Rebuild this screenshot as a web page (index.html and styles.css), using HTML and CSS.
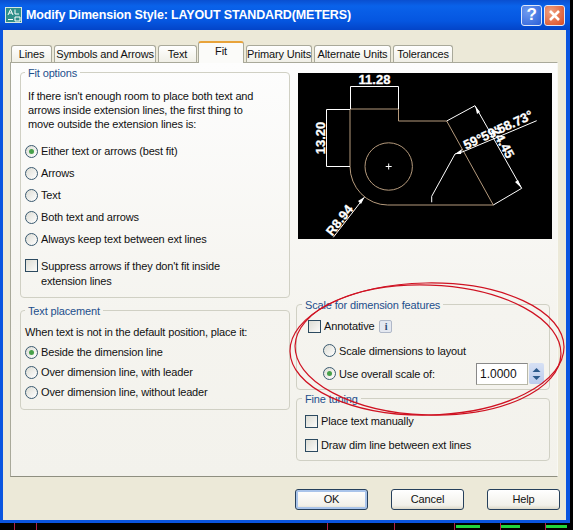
FILE: index.html
```html
<!doctype html>
<html lang="en">
  <head>
    <meta charset="UTF-8">
    <meta name="viewport" content="width=device-width, initial-scale=1.0">
    <title>Modify Dimension Style</title>
    <link rel="stylesheet" href="styles.css">
  </head>
  <body>
    <div class="window">
      <!-- Title bar -->
      <div class="titlebar">
        <svg class="app-icon" width="17" height="16" viewBox="0 0 17 16">
          <rect x="0.5" y="0.5" width="16" height="15" fill="#2f8f8a" stroke="#d8e8e0"/>
          <path d="M3 8 L5.5 2.5 L8 8 M4 6 H7" fill="none" stroke="#fff"/>
          <path d="M10 2.5 V7 H14 M3 12.5 H8 M10 10 H15 V14 H10 Z" fill="none" stroke="#fff"/>
        </svg>
        <span class="title">Modify Dimension Style: LAYOUT STANDARD(METERS)</span>
        <span class="cap-btn cap-help">?</span>
        <span class="cap-btn cap-close">
          <svg width="13" height="13" viewBox="0 0 13 13"><path d="M2 2 L11 11 M11 2 L2 11" stroke="#fff" stroke-width="2.6"/></svg>
        </span>
      </div>

      <div class="client">
        <!-- Tabs -->
        <div class="tabs">
          <span class="tab tab-lines">Lines</span>
          <span class="tab tab-symbols">Symbols and Arrows</span>
          <span class="tab tab-text">Text</span>
          <span class="tab tab-fit active">Fit</span>
          <span class="tab tab-primary">Primary Units</span>
          <span class="tab tab-alt">Alternate Units</span>
          <span class="tab tab-tol">Tolerances</span>
        </div>

        <div class="page">
          <div class="col-left">
            <fieldset class="group group-fit">
              <legend>Fit options</legend>
              <p class="note">If there isn't enough room to place both text and<br>arrows inside extension lines, the first thing to<br>move outside the extension lines is:</p>
              <div class="radios-fit">
                <div class="row"><span class="radio on"></span>Either text or arrows (best fit)</div>
                <div class="row"><span class="radio"></span>Arrows</div>
                <div class="row"><span class="radio"></span>Text</div>
                <div class="row"><span class="radio"></span>Both text and arrows</div>
                <div class="row"><span class="radio"></span>Always keep text between ext lines</div>
              </div>
              <div class="row-check">
                <span class="check"></span>
                <span>Suppress arrows if they don't fit inside<br>extension lines</span>
              </div>
            </fieldset>

            <fieldset class="group group-place">
              <legend>Text placement</legend>
              <p class="note-place">When text is not in the default position, place it:</p>
              <div class="row row-place"><span class="radio on"></span>Beside the dimension line</div>
              <div class="row row-place"><span class="radio"></span>Over dimension line, with leader</div>
              <div class="row row-place"><span class="radio"></span>Over dimension line, without leader</div>
            </fieldset>
          </div>

          <div class="col-right">
            <!-- Preview drawing, coordinates are screen pixels -->
            <svg class="preview" width="254" height="166" viewBox="298 74 254 166">
              <rect x="298" y="74" width="254" height="166" fill="#000"/>
              <g fill="none" stroke="#b59a7c">
                <path d="M350 110 H398.5 V122 H446.7 L493.3 206 H387.7 A37.7 38.7 0 0 1 350 167.3 Z"/>
                <circle cx="388.7" cy="167.5" r="23.7"/>
              </g>
              <g fill="none" stroke="#fff">
                <path d="M350.5 110 V87.5 H398.5 V110"/>
                <path d="M350 110.5 H326.5 V167.5 H350"/>
                <path d="M385.7 167.5 H391.7 M388.7 164.5 V170.5"/>
                <path d="M333.3 238.3 L364.3 198.3"/>
                <path d="M446.7 122 L475 106.7 L521.7 189.3 L493.3 206"/>
                <path d="M431.7 203.3 V197.3 L455 155 L463 152.7 L536.7 121.7"/>
              </g>
              <path d="M364.5 198 L358 202 L361 205 Z M455 155 L462 150 L461 155 Z M521.7 189.3 L515 183 L518 181 Z M475 106.7 L480 113 L477 115 Z" fill="#fff"/>
              <g class="dim-text">
                <text x="374.5" y="85" text-anchor="middle">11.28</text>
                <text transform="translate(325 139) rotate(-90)" text-anchor="middle">13.20</text>
                <text transform="translate(343 224) rotate(-52)" text-anchor="middle">R8.94</text>
                <text transform="translate(500 135) rotate(-25)" text-anchor="middle">59°59'58.73°</text>
                <text transform="translate(499 146) rotate(61)" text-anchor="middle">24.45</text>
              </g>
            </svg>

            <fieldset class="group group-scale">
              <legend>Scale for dimension features</legend>
              <div class="row row-annot">
                <span class="check"></span>Annotative
                <span class="info">i</span>
              </div>
              <div class="row row-scale row-scale-first"><span class="radio"></span>Scale dimensions to layout</div>
              <div class="row row-scale">
                <span class="radio on"></span>Use overall scale of:
                <span class="spin-input">1.0000</span>
                <span class="spinner">
                  <svg width="15" height="21" viewBox="0 0 15 21">
                    <path d="M7.5 5 L11.5 9 H3.5 Z M7.5 17 L11.5 13 H3.5 Z" fill="#2c5a8c"/>
                  </svg>
                </span>
              </div>
            </fieldset>

            <fieldset class="group group-fine">
              <legend>Fine tuning</legend>
              <div class="row row-fine row-fine-first"><span class="check"></span>Place text manually</div>
              <div class="row row-fine"><span class="check"></span>Draw dim line between ext lines</div>
            </fieldset>
          </div>
        </div>

        <!-- Buttons -->
        <div class="buttons">
          <span class="btn btn-default">OK</span>
          <span class="btn">Cancel</span>
          <span class="btn">Help</span>
        </div>
      </div>

      <!-- Hand drawn red ellipse over the dialog -->
      <svg class="markup" width="573" height="530" viewBox="0 0 573 530">
        <g fill="none" stroke="#cf1222" stroke-width="1.2">
          <ellipse cx="427" cy="349" rx="137" ry="66" transform="rotate(-1 427 349)"/>
          <ellipse cx="428" cy="350" rx="133" ry="65" transform="rotate(2 428 350)"/>
        </g>
      </svg>
    </div>

    <!-- Bit of the desktop below the dialog -->
    <svg class="below" width="573" height="7" viewBox="0 0 573 7">
      <path d="M14.5 0 V7 M36.5 0 V7 M327.5 0 V7 M394.5 0 V7 M454.5 0 V7 M500.5 0 V7 M545.5 0 V7" stroke="#b0204a"/>
      <path d="M456 2 H480 V5 H456 Z M501 2 H520 V5 H501 Z M546 2 H567 V5 H546 Z" fill="#22d63c"/>
    </svg>
  </body>
</html>
```

FILE: styles.css
```css
body {
  margin: 0;
  background: #000;
  font-family: "Liberation Sans", Arial, sans-serif;
  font-size: 11px;
  letter-spacing: -0.15px;
  color: #111;
  width: 573px;
  height: 530px;
  overflow: hidden;
}
.window {
  position: relative;
  width: 570px;
  height: 523px;
  background: #0a55e0;
  box-sizing: border-box;
  border-radius: 0 6px 0 0;
}
.titlebar {
  height: 30px;
  display: flex;
  align-items: center;
  padding: 0 5px;
  background: linear-gradient(#0a4fd0, #0a62ea 20%, #0556e0 70%, #0344c8);
}
.app-icon {
  margin-right: 4px;
}
.title {
  flex: 1;
  color: #fff;
  font-weight: bold;
  font-size: 12.5px;
  white-space: nowrap;
}
.cap-btn {
  width: 21px;
  height: 21px;
  box-sizing: border-box;
  border: 1px solid #dfe8fa;
  border-radius: 3px;
  display: flex;
  align-items: center;
  justify-content: center;
  color: #fff;
  font-size: 17px;
  font-weight: bold;
}
.cap-help {
  background: radial-gradient(circle at 30% 30%, #6f9bf0, #2a5fd8);
  margin-right: 2px;
}
.cap-close {
  background: radial-gradient(circle at 30% 30%, #f0a080, #d84a22);
}
.client {
  margin: 0 4px 0 3px;
  height: 490px;
  background: #ece9d8;
  padding: 11px 0 0 7px;
  box-sizing: border-box;
}
.tabs {
  display: flex;
  align-items: flex-end;
  height: 21px;
  padding-left: 1px;
  position: relative;
  z-index: 1;
}
.tab {
  height: 17px;
  line-height: 16px;
  box-sizing: border-box;
  margin-right: 2px;
  text-align: center;
  border: 1px solid #a9a99a;
  border-bottom: none;
  border-radius: 3px 3px 0 0;
  background: linear-gradient(#fff, #f0efe6);
  white-space: nowrap;
}
.tab.active {
  line-height: 16px;
  margin-bottom: -1px;
  height: 22px;
  background: #fbfbf9;
  border-top: 2px solid #e8a33a;
}
.tab-lines { width: 41px; }
.tab-symbols { width: 102px; }
.tab-text { width: 39px; margin-right: 1px; }
.tab-fit { width: 46px; margin-right: 2px; }
.tab-primary { width: 66px; }
.tab-alt { width: 77px; }
.tab-tol { width: 60px; }
.page {
  width: 548px;
  height: 415px;
  box-sizing: border-box;
  border: 1px solid #a9a99a;
  border-right-color: #f8f8f4;
  border-bottom-color: #8f8f80;
  background: linear-gradient(#fdfdfd, #f5f4ef 60%, #f3f2ec);
  display: flex;
  padding-left: 9px;
}
.col-left {
  width: 270px;
  margin-right: 6px;
}
.col-right {
  width: 254px;
}
.group {
  margin: 0;
  padding: 0;
  box-sizing: border-box;
  border: 1px solid #d0d0c4;
  border-radius: 4px;
}
.group legend {
  margin-left: 5px;
  padding: 2px 3px 0;
  color: #1d4f8c;
  line-height: 14px;
}
.group-fit {
  height: 234px;
  margin-top: 1px;
  padding: 9px 0 0 7px;
}
.group-fit legend {
  margin-left: -3px;
}
.group-place {
  height: 108px;
  margin-top: 4px;
  padding: 0 0 0 4px;
}
.group-place legend {
  margin-left: 0;
}
.note {
  margin: 0;
  line-height: 14px;
}
.note-place {
  margin: 7px 0 0;
  height: 14px;
  line-height: 14px;
}
.radios-fit {
  margin: 9px 0 0 -3px;
}
.row {
  display: flex;
  align-items: center;
  height: 22px;
  white-space: nowrap;
}
.row-place {
  height: 20px;
}
.note-place + .row-place {
  margin-top: 3px;
}
.radio {
  width: 13px;
  height: 13px;
  box-sizing: border-box;
  border: 1px solid #3a5a70;
  border-radius: 50%;
  background: linear-gradient(135deg, #dcdcd4, #fff);
  margin-right: 3px;
  flex: none;
  position: relative;
}
.radio.on::after {
  content: "";
  position: absolute;
  left: 3px;
  top: 3px;
  width: 5px;
  height: 5px;
  border-radius: 50%;
  background: #47a04a;
}
.check {
  width: 13px;
  height: 13px;
  box-sizing: border-box;
  border: 1px solid #2c4a60;
  background: linear-gradient(135deg, #dcdcd4, #fbfbf9);
  margin-right: 3px;
  flex: none;
}
.row-check {
  display: flex;
  margin: 9px 0 0 -3px;
  line-height: 15px;
}
.row-annot {
  margin: 4px 0 0 11px;
  height: 20px;
}
.info {
  width: 13px;
  height: 13px;
  box-sizing: border-box;
  margin-left: 5px;
  border: 1px solid #b0b8c8;
  border-radius: 2px;
  background: #e4e8f0;
  color: #2c4a70;
  font: bold 10px/11px "Liberation Serif", serif;
  text-align: center;
}
.row-scale {
  margin-left: 26px;
  padding-right: 5px;
  height: 23px;
}
.row-scale-first {
  margin-top: 3px;
}
.spin-input {
  width: 52px;
  height: 22px;
  box-sizing: border-box;
  margin-left: auto;
  padding-left: 3px;
  line-height: 20px;
  border: 1px solid #b8b8a8;
  border-top-color: #888;
  border-left-color: #888;
  background: #fff;
  font-size: 12px;
  letter-spacing: 0;
}
.spinner {
  width: 15px;
  height: 21px;
  margin-left: 1px;
  background: linear-gradient(#d6e0f4, #bccdee);
  border-radius: 2px;
}
.preview {
  display: block;
  margin: 10px 0 0 2px;
}
.group-scale {
  height: 94px;
  margin-top: 57px;
}
.group-fine {
  height: 71px;
  margin-top: 0;
}
.row-fine {
  margin-left: 8px;
  height: 24px;
}
.row-fine-first {
  margin-top: 3px;
}
.buttons {
  display: flex;
  justify-content: flex-end;
  gap: 23px;
  width: 550px;
  margin-top: 12px;
}
.btn {
  width: 73px;
  height: 21px;
  box-sizing: border-box;
  border: 1px solid #26405c;
  border-radius: 3px;
  background: linear-gradient(#fff, #f2f1ea 80%, #dcd8c8);
  text-align: center;
  line-height: 19px;
}
.btn-default {
  box-shadow: inset 0 0 0 2px #a9c4ea;
}
.markup {
  position: absolute;
  left: 0;
  top: 0;
  pointer-events: none;
}
.below {
  display: block;
}
.dim-text {
  fill: #fff;
  stroke: #fff;
  stroke-width: 0.3;
  font-weight: bold;
  font-size: 13px;
  letter-spacing: 0;
}
```
